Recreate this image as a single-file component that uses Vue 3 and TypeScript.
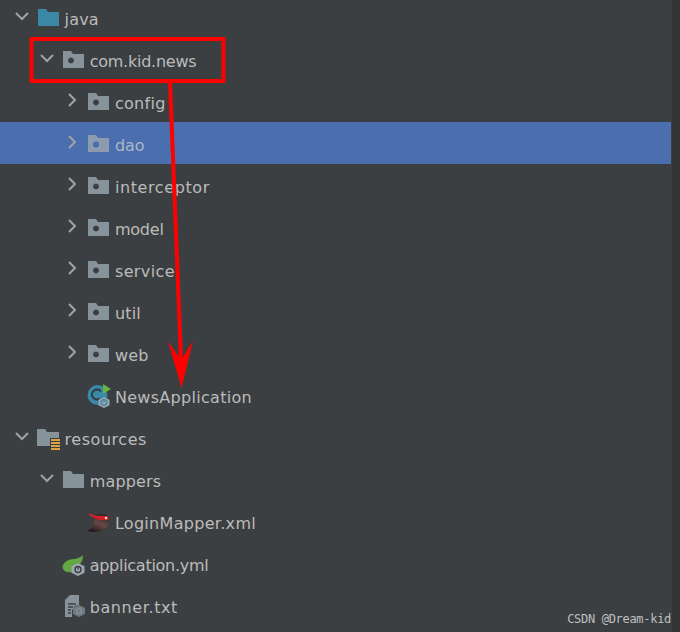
<template>
  <div class="panel">
    <div class="tree">
      <div
        v-for="row in rows"
        :key="row.label"
        class="row"
        :class="{ selected: row.selected }"
        :style="{ paddingLeft: `${14 + row.depth * 25.2}px` }"
      >
        <span class="chevron-slot">
          <svg v-if="row.open !== undefined" width="16" height="16" viewBox="0 0 16 16">
            <polyline
              :points="row.open ? '2,5 8,11 14,5' : '5,2 11,8 5,14'"
              fill="none"
              stroke="#a0a2a4"
              stroke-width="2"
            />
          </svg>
        </span>

        <svg class="icon" width="26" height="26" viewBox="0 0 26 26">
          <template v-if="row.icon === 'source'">
            <path d="M2 5h8l2 3h11v14H2z" fill="#3b87a6" />
          </template>
          <template v-else-if="row.icon === 'package'">
            <path
              fill-rule="evenodd"
              d="M2 5h8l2 3h11v14H2zM10 11.500a3 3 0 1 0 0.010 0z"
              :fill="row.selected ? '#8d9bae' : '#87939a'"
            />
            <circle v-if="row.selected" cx="10" cy="14.500" r="3" fill="#4b6eaf" />
          </template>
          <template v-else-if="row.icon === 'folder'">
            <path d="M2 5h8l2 3h11v14H2z" fill="#87939a" />
          </template>
          <template v-else-if="row.icon === 'resources'">
            <path d="M1 5h8l2 3h12v6h-9v8H1z" fill="#87939a" />
            <path d="M15 16h9M15 19h9M15 22h9M15 25h9" stroke="#d9a343" stroke-width="2" />
          </template>
          <template v-else-if="row.icon === 'app'">
            <circle cx="11.500" cy="13" r="10" fill="#3b87a6" />
            <path d="M15 9.500a5 5 0 1 0-1 7" fill="none" stroke="#2f3a40" stroke-width="2" />
            <path d="M17 2l8 5-8 5z" fill="#62b543" />
            <path d="M18 15l5.500 2.800v5.400L18 26l-5.500-2.800v-5.400z" fill="#9aa7b0" />
            <circle cx="18" cy="20.500" r="2.800" fill="none" stroke="#3b87a6" stroke-width="1.300" />
            <path d="M18 17.500v3" stroke="#3b87a6" stroke-width="1.300" />
          </template>
          <template v-else-if="row.icon === 'mybatis'">
            <defs>
              <linearGradient id="head" x1="0.800" y1="0" x2="0.300" y2="1">
                <stop offset="0" stop-color="#2b2524" />
                <stop offset="0.550" stop-color="#6a4744" />
                <stop offset="1" stop-color="#1f1b1b" />
              </linearGradient>
            </defs>
            <path d="M9 8C12 5 20 5 23 9c2 5-1 12-8 14-5 1.500-10 1-14 0 4-2 7-6 7-10z" fill="url(#head)" />
            <path d="M3 5l7 3h12l1 4H13L9 10 4 8z" fill="#cf2127" />
            <circle cx="20" cy="10" r="1.200" fill="#e8e8e8" />
          </template>
          <template v-else-if="row.icon === 'spring'">
            <path d="M1.500 17C2 12 8 9 13 9c4-.5 7-2 9-4 0 4-1 7-3 9l-6 8C8 23 2 22 1.500 17z" fill="#62a744" />
            <path d="M17 13l6.500 3.300v6.400L17 26l-6.500-3.300v-6.400z" fill="#9aa7b0" />
            <circle cx="17" cy="19.500" r="3" fill="none" stroke="#3c3f41" stroke-width="1.400" />
            <path d="M17 16.500v3" stroke="#3c3f41" stroke-width="1.400" />
          </template>
          <template v-else-if="row.icon === 'text'">
            <path d="M9 3h9v10l-4 1-3 4v7H4V8z" fill="#87939a" />
            <path d="M7 12h8M7 15h5M7 18h3M7 21h3" stroke="#3c3f41" stroke-width="1.400" />
            <path d="M18 13l6 3v6l-6 3-6-3v-6z" fill="#6e7b83" />
            <circle cx="18" cy="19" r="2.500" fill="none" stroke="#87939a" stroke-width="1.200" />
          </template>
        </svg>

        <span class="label" :style="{ letterSpacing: `${row.spacing ?? 0}px` }">{{ row.label }}</span>
      </div>
    </div>
    <div class="gutter"></div>

    <svg class="annotation" width="680" height="632" viewBox="0 0 680 632">
      <rect x="31.500" y="39" width="192" height="42" fill="none" stroke="#ff0000" stroke-width="4" />
      <path d="M170 81L181 360" stroke="#ff0000" stroke-width="4" fill="none" />
      <path d="M168 341L181 360L193 341L181.500 388z" fill="#ff0000" />
    </svg>

    <span class="watermark">CSDN @Dream-kid</span>
  </div>
</template>

<script setup lang="ts">
type IconName = 'source' | 'package' | 'folder' | 'resources' | 'app' | 'mybatis' | 'spring' | 'text'

interface Row {
  label: string
  depth: number
  icon: IconName
  open?: boolean
  selected?: boolean
  spacing?: number
}

// spacing: small per-label correction, the original font is wider on some words
const rows: Row[] = [
  { label: 'java', depth: 0, icon: 'source', open: true, spacing: 0.2 },
  { label: 'com.kid.news', depth: 1, icon: 'package', open: true, spacing: -0.25 },
  { label: 'config', depth: 2, icon: 'package', open: false, spacing: 0.3 },
  { label: 'dao', depth: 2, icon: 'package', open: false, selected: true },
  { label: 'interceptor', depth: 2, icon: 'package', open: false, spacing: 0.6 },
  { label: 'model', depth: 2, icon: 'package', open: false, spacing: -0.2 },
  { label: 'service', depth: 2, icon: 'package', open: false, spacing: 0.4 },
  { label: 'util', depth: 2, icon: 'package', open: false, spacing: 0.2 },
  { label: 'web', depth: 2, icon: 'package', open: false, spacing: 0.2 },
  { label: 'NewsApplication', depth: 2, icon: 'app', spacing: 0.3 },
  { label: 'resources', depth: 0, icon: 'resources', open: true, spacing: 0.55 },
  { label: 'mappers', depth: 1, icon: 'folder', open: true, spacing: 0.15 },
  { label: 'LoginMapper.xml', depth: 2, icon: 'mybatis', spacing: 0.3 },
  { label: 'application.yml', depth: 1, icon: 'spring', spacing: -0.27 },
  { label: 'banner.txt', depth: 1, icon: 'text', spacing: 0.6 },
]
</script>

<style>
html,
body {
  margin: 0;
  background: #3c3f41;
}
</style>

<style scoped>
.panel {
  position: relative;
  display: flex;
  width: 680px;
  height: 632px;
  overflow: hidden;
  background: #3c3f41;
  font-family: "DejaVu Sans", sans-serif;
}

.tree {
  width: 671px;
  margin-top: -4px;
}

.gutter {
  flex: 1;
  margin-left: 1px;
  background: #313335;
}

.row {
  display: flex;
  align-items: center;
  height: 42px;
  box-sizing: border-box;
}

.selected {
  background: #4b6eaf;
}

.chevron-slot {
  display: flex;
  width: 16px;
  height: 16px;
  margin-right: 6px;
  position: relative;
  top: -1px;
}

.icon {
  flex: none;
  margin-right: 2.5px;
}

.label {
  color: #bbbbbb;
  font-size: 16px;
  padding-top: 4px;
  white-space: nowrap;
}

.selected .label {
  color: #a9b7c6;
}

.annotation {
  position: absolute;
  left: 0;
  top: 0;
}

.watermark {
  position: absolute;
  right: 9px;
  bottom: 6px;
  color: #bdbfc0;
  font-family: "DejaVu Sans Mono", monospace;
  font-size: 12px;
  letter-spacing: -0.3px;
}
</style>
